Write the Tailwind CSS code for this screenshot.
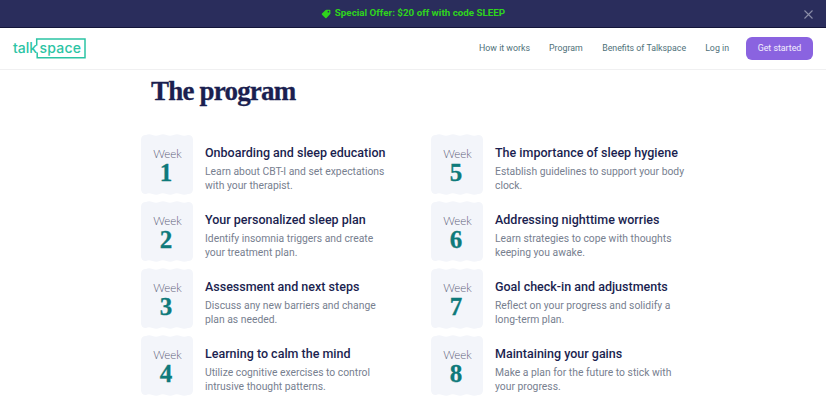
<!DOCTYPE html>
<html><head><meta charset="utf-8">
<script src="https://cdn.jsdelivr.net/npm/@tailwindcss/browser@4"></script>
</head>
<body class="bg-white font-['Roboto',sans-serif] overflow-hidden">
<div class="w-[826px] h-[417px] overflow-hidden flex flex-col">
  <div class="h-[28px] shrink-0 bg-[#2a2d5c] border-b border-[#14163a] flex items-center justify-center relative">
    <div class="flex items-center gap-[4px] text-[9.8px] font-bold text-[#2fd41c]">
      <svg width="10" height="10" viewBox="0 0 12 12"><path d="M6.8 .8H10.200Q11.300 .8 11.300 1.900V5.300Q11.300 5.900 10.800 6.400L6.600 10.800Q5.900 11.500 5.200 10.800L1.200 6.800Q.5 6.100 1.200 5.400L5.600 1.300Q6.100 .8 6.800 .8Z" fill="#2fd41c"/><circle cx="8.900" cy="3.200" r="1" fill="#2a2d5c"/></svg>
      <span>Special Offer: $20 off with code SLEEP</span>
    </div>
    <svg class="absolute right-[13px] top-[10px]" width="9" height="9" viewBox="0 0 9 9"><path d="M.5.5l8 8M8.5.5l-8 8" stroke="#8b8ea8" stroke-width="1.1"/></svg>
  </div>
  <header class="h-[42px] shrink-0 bg-white border-b border-[#f0f0f1] flex items-center justify-between pl-[13px] pr-[13px]">
    <div class="relative w-[74px] h-[22px] text-[#2bc4a4] font-['Inter',sans-serif] text-[14px] leading-[22px] font-medium">
      <span class="absolute left-0 top-[-1px]">talk</span>
      <span class="absolute left-[26.500px] top-[-1px] tracking-[0.2px]">space</span>
      <svg class="absolute left-0 top-0" width="74" height="22" viewBox="0 0 74 22" fill="none"><path d="M23.700 7.500V1H72V19.800H24.200V14.500" stroke="#2bc4a4" stroke-width="1.5"/></svg>
    </div>
    <nav class="flex items-center text-[8.8px] text-[#4f7179]">
      <a class="mr-[19px]">How it works</a>
      <a class="mr-[19.500px]">Program</a>
      <a class="mr-[19px]">Benefits of Talkspace</a>
      <a class="mr-[17px]">Log in</a>
      <a class="w-[67px] h-[23px] rounded-[6px] bg-[#8a63e0] text-white/90 flex items-center justify-center">Get started</a>
    </nav>
  </header>
  <main class="pl-[140px]">
    <h1 class="pl-[11px] pt-[5px] h-[65px] text-[27px] leading-[32px] font-bold tracking-[-0.8px] [-webkit-text-stroke:0.3px_#1b1f50] text-[#1b1f50] font-['Liberation_Serif',serif]">The program</h1>
    <div class="grid grid-cols-[290px_290px] auto-rows-[67px] -mt-[1px]">
      <div class="flex">
        <div class="relative w-[52px] h-[63px] shrink-0 flex flex-col items-center pt-[14px]">
          <svg class="absolute left-[0.500px] top-0" width="52" height="63" viewBox="0 0 52 63"><path d="M5 1Q8-.5 11.500 1T18.500 1 25.500 1 32.500 1 39.500 1 47 1Q52 1 52 6V55Q52 60 47 60 43.500 61.500 39.500 60T32.500 60 25.500 60 18.500 60 11.500 60 5 60Q0 60 0 55V6Q0 1 5 1Z" fill="#f3f5fa"/></svg>
          <span class="relative pl-[3px] text-[11.5px] leading-[12px] text-[#5d6079] font-['Lato',sans-serif] font-light">Week</span>
          <span class="relative text-[25px] leading-[25px] font-bold [-webkit-text-stroke:0.3px_#0e7a7a] text-[#0e7a7a] font-['Liberation_Serif',serif]">1</span>
        </div>
        <div class="pl-[13px] pt-[11px]">
          <h3 class="text-[12.5px] leading-[16px] font-medium text-[#1b1f50]">Onboarding and sleep education</h3>
          <p class="mt-[3.500px] text-[10.350px] leading-[14.500px] text-[#77808f] w-[190px]">Learn about CBT-I and set expectations with your therapist.</p>
        </div>
      </div>
      <div class="flex">
        <div class="relative w-[52px] h-[63px] shrink-0 flex flex-col items-center pt-[14px]">
          <svg class="absolute left-[0.500px] top-0" width="52" height="63" viewBox="0 0 52 63"><path d="M5 1Q8-.5 11.500 1T18.500 1 25.500 1 32.500 1 39.500 1 47 1Q52 1 52 6V55Q52 60 47 60 43.500 61.500 39.500 60T32.500 60 25.500 60 18.500 60 11.500 60 5 60Q0 60 0 55V6Q0 1 5 1Z" fill="#f3f5fa"/></svg>
          <span class="relative pl-[3px] text-[11.5px] leading-[12px] text-[#5d6079] font-['Lato',sans-serif] font-light">Week</span>
          <span class="relative text-[25px] leading-[25px] font-bold [-webkit-text-stroke:0.3px_#0e7a7a] text-[#0e7a7a] font-['Liberation_Serif',serif]">5</span>
        </div>
        <div class="pl-[13px] pt-[11px]">
          <h3 class="text-[12.5px] leading-[16px] font-medium text-[#1b1f50]">The importance of sleep hygiene</h3>
          <p class="mt-[3.500px] text-[10.350px] leading-[14.500px] text-[#77808f] w-[190px]">Establish guidelines to support your body clock.</p>
        </div>
      </div>
      <div class="flex">
        <div class="relative w-[52px] h-[63px] shrink-0 flex flex-col items-center pt-[14px]">
          <svg class="absolute left-[0.500px] top-0" width="52" height="63" viewBox="0 0 52 63"><path d="M5 1Q8-.5 11.500 1T18.500 1 25.500 1 32.500 1 39.500 1 47 1Q52 1 52 6V55Q52 60 47 60 43.500 61.500 39.500 60T32.500 60 25.500 60 18.500 60 11.500 60 5 60Q0 60 0 55V6Q0 1 5 1Z" fill="#f3f5fa"/></svg>
          <span class="relative pl-[3px] text-[11.5px] leading-[12px] text-[#5d6079] font-['Lato',sans-serif] font-light">Week</span>
          <span class="relative text-[25px] leading-[25px] font-bold [-webkit-text-stroke:0.3px_#0e7a7a] text-[#0e7a7a] font-['Liberation_Serif',serif]">2</span>
        </div>
        <div class="pl-[13px] pt-[11px]">
          <h3 class="text-[12.5px] leading-[16px] font-medium text-[#1b1f50]">Your personalized sleep plan</h3>
          <p class="mt-[3.500px] text-[10.350px] leading-[14.500px] text-[#77808f] w-[190px]">Identify insomnia triggers and create your treatment plan.</p>
        </div>
      </div>
      <div class="flex">
        <div class="relative w-[52px] h-[63px] shrink-0 flex flex-col items-center pt-[14px]">
          <svg class="absolute left-[0.500px] top-0" width="52" height="63" viewBox="0 0 52 63"><path d="M5 1Q8-.5 11.500 1T18.500 1 25.500 1 32.500 1 39.500 1 47 1Q52 1 52 6V55Q52 60 47 60 43.500 61.500 39.500 60T32.500 60 25.500 60 18.500 60 11.500 60 5 60Q0 60 0 55V6Q0 1 5 1Z" fill="#f3f5fa"/></svg>
          <span class="relative pl-[3px] text-[11.5px] leading-[12px] text-[#5d6079] font-['Lato',sans-serif] font-light">Week</span>
          <span class="relative text-[25px] leading-[25px] font-bold [-webkit-text-stroke:0.3px_#0e7a7a] text-[#0e7a7a] font-['Liberation_Serif',serif]">6</span>
        </div>
        <div class="pl-[13px] pt-[11px]">
          <h3 class="text-[12.5px] leading-[16px] font-medium text-[#1b1f50]">Addressing nighttime worries</h3>
          <p class="mt-[3.500px] text-[10.350px] leading-[14.500px] text-[#77808f] w-[190px]">Learn strategies to cope with thoughts keeping you awake.</p>
        </div>
      </div>
      <div class="flex">
        <div class="relative w-[52px] h-[63px] shrink-0 flex flex-col items-center pt-[14px]">
          <svg class="absolute left-[0.500px] top-0" width="52" height="63" viewBox="0 0 52 63"><path d="M5 1Q8-.5 11.500 1T18.500 1 25.500 1 32.500 1 39.500 1 47 1Q52 1 52 6V55Q52 60 47 60 43.500 61.500 39.500 60T32.500 60 25.500 60 18.500 60 11.500 60 5 60Q0 60 0 55V6Q0 1 5 1Z" fill="#f3f5fa"/></svg>
          <span class="relative pl-[3px] text-[11.5px] leading-[12px] text-[#5d6079] font-['Lato',sans-serif] font-light">Week</span>
          <span class="relative text-[25px] leading-[25px] font-bold [-webkit-text-stroke:0.3px_#0e7a7a] text-[#0e7a7a] font-['Liberation_Serif',serif]">3</span>
        </div>
        <div class="pl-[13px] pt-[11px]">
          <h3 class="text-[12.5px] leading-[16px] font-medium text-[#1b1f50]">Assessment and next steps</h3>
          <p class="mt-[3.500px] text-[10.350px] leading-[14.500px] text-[#77808f] w-[190px]">Discuss any new barriers and change plan as needed.</p>
        </div>
      </div>
      <div class="flex">
        <div class="relative w-[52px] h-[63px] shrink-0 flex flex-col items-center pt-[14px]">
          <svg class="absolute left-[0.500px] top-0" width="52" height="63" viewBox="0 0 52 63"><path d="M5 1Q8-.5 11.500 1T18.500 1 25.500 1 32.500 1 39.500 1 47 1Q52 1 52 6V55Q52 60 47 60 43.500 61.500 39.500 60T32.500 60 25.500 60 18.500 60 11.500 60 5 60Q0 60 0 55V6Q0 1 5 1Z" fill="#f3f5fa"/></svg>
          <span class="relative pl-[3px] text-[11.5px] leading-[12px] text-[#5d6079] font-['Lato',sans-serif] font-light">Week</span>
          <span class="relative text-[25px] leading-[25px] font-bold [-webkit-text-stroke:0.3px_#0e7a7a] text-[#0e7a7a] font-['Liberation_Serif',serif]">7</span>
        </div>
        <div class="pl-[13px] pt-[11px]">
          <h3 class="text-[12.5px] leading-[16px] font-medium text-[#1b1f50]">Goal check-in and adjustments</h3>
          <p class="mt-[3.500px] text-[10.350px] leading-[14.500px] text-[#77808f] w-[190px]">Reflect on your progress and solidify a long-term plan.</p>
        </div>
      </div>
      <div class="flex">
        <div class="relative w-[52px] h-[63px] shrink-0 flex flex-col items-center pt-[14px]">
          <svg class="absolute left-[0.500px] top-0" width="52" height="63" viewBox="0 0 52 63"><path d="M5 1Q8-.5 11.500 1T18.500 1 25.500 1 32.500 1 39.500 1 47 1Q52 1 52 6V55Q52 60 47 60 43.500 61.500 39.500 60T32.500 60 25.500 60 18.500 60 11.500 60 5 60Q0 60 0 55V6Q0 1 5 1Z" fill="#f3f5fa"/></svg>
          <span class="relative pl-[3px] text-[11.5px] leading-[12px] text-[#5d6079] font-['Lato',sans-serif] font-light">Week</span>
          <span class="relative text-[25px] leading-[25px] font-bold [-webkit-text-stroke:0.3px_#0e7a7a] text-[#0e7a7a] font-['Liberation_Serif',serif]">4</span>
        </div>
        <div class="pl-[13px] pt-[11px]">
          <h3 class="text-[12.5px] leading-[16px] font-medium text-[#1b1f50]">Learning to calm the mind</h3>
          <p class="mt-[3.500px] text-[10.350px] leading-[14.500px] text-[#77808f] w-[190px]">Utilize cognitive exercises to control intrusive thought patterns.</p>
        </div>
      </div>
      <div class="flex">
        <div class="relative w-[52px] h-[63px] shrink-0 flex flex-col items-center pt-[14px]">
          <svg class="absolute left-[0.500px] top-0" width="52" height="63" viewBox="0 0 52 63"><path d="M5 1Q8-.5 11.500 1T18.500 1 25.500 1 32.500 1 39.500 1 47 1Q52 1 52 6V55Q52 60 47 60 43.500 61.500 39.500 60T32.500 60 25.500 60 18.500 60 11.500 60 5 60Q0 60 0 55V6Q0 1 5 1Z" fill="#f3f5fa"/></svg>
          <span class="relative pl-[3px] text-[11.5px] leading-[12px] text-[#5d6079] font-['Lato',sans-serif] font-light">Week</span>
          <span class="relative text-[25px] leading-[25px] font-bold [-webkit-text-stroke:0.3px_#0e7a7a] text-[#0e7a7a] font-['Liberation_Serif',serif]">8</span>
        </div>
        <div class="pl-[13px] pt-[11px]">
          <h3 class="text-[12.5px] leading-[16px] font-medium text-[#1b1f50]">Maintaining your gains</h3>
          <p class="mt-[3.500px] text-[10.350px] leading-[14.500px] text-[#77808f] w-[190px]">Make a plan for the future to stick with your progress.</p>
        </div>
      </div>
    </div>
  </main>
</div>
</body></html>
